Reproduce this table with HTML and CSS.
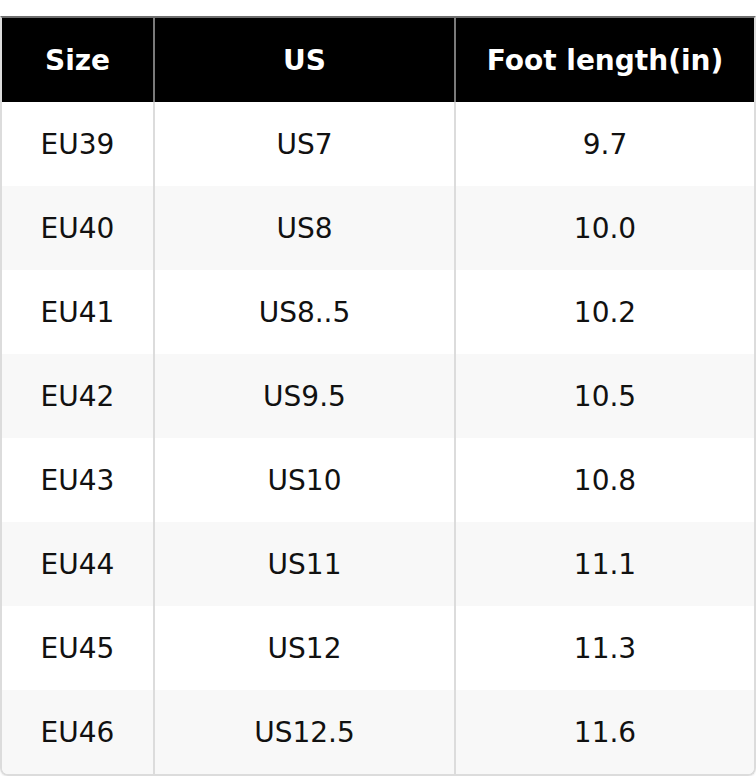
FILE: index.html
```html
<!DOCTYPE html>
<html lang="en">
<head>
<meta charset="utf-8">
<title>Size chart</title>
<link rel="stylesheet" href="styles.css">
</head>
<body>
<div class="wrap">
<table class="size-table">
  <colgroup>
    <col class="c1">
    <col class="c2">
    <col class="c3">
  </colgroup>
  <thead>
    <tr><th>Size</th><th>US</th><th>Foot length(in)</th></tr>
  </thead>
  <tbody>
    <tr><td>EU39</td><td>US7</td><td>9.7</td></tr>
    <tr><td>EU40</td><td>US8</td><td>10.0</td></tr>
    <tr><td>EU41</td><td>US8..5</td><td>10.2</td></tr>
    <tr><td>EU42</td><td>US9.5</td><td>10.5</td></tr>
    <tr><td>EU43</td><td>US10</td><td>10.8</td></tr>
    <tr><td>EU44</td><td>US11</td><td>11.1</td></tr>
    <tr><td>EU45</td><td>US12</td><td>11.3</td></tr>
    <tr><td>EU46</td><td>US12.5</td><td>11.6</td></tr>
  </tbody>
</table>
</div>
</body>
</html>
```

FILE: styles.css
```css
html, body {
  margin: 0;
  padding: 0;
  background: #ffffff;
}
.wrap {
  padding-top: 16px;
}
.size-table {
  width: 756px;
  table-layout: fixed;
  border-collapse: separate;
  border-spacing: 0;
  border: 2px solid #dcdcdc;
  border-top-color: #6e6e6e;
  border-radius: 0 0 8px 8px;
  overflow: hidden;
  box-shadow: 0 1px 2px rgba(0, 0, 0, 0.08);
  font-family: "DejaVu Sans", Verdana, sans-serif;
  font-size: 28px;
  color: #111111;
}
.c1 { width: 151px; }
.c2 { width: 301px; }
.size-table th,
.size-table td {
  height: 84px;
  padding: 0;
  text-align: center;
  vertical-align: middle;
  box-sizing: border-box;
}
.size-table th {
  background: #000000;
  color: #ffffff;
  font-weight: bold;
}
.size-table th + th {
  border-left: 2px solid #7a7a7a;
}
.size-table td + td {
  border-left: 2px solid #dcdcdc;
}
.size-table tbody tr:nth-child(even) td {
  background: #f8f8f8;
}
```
